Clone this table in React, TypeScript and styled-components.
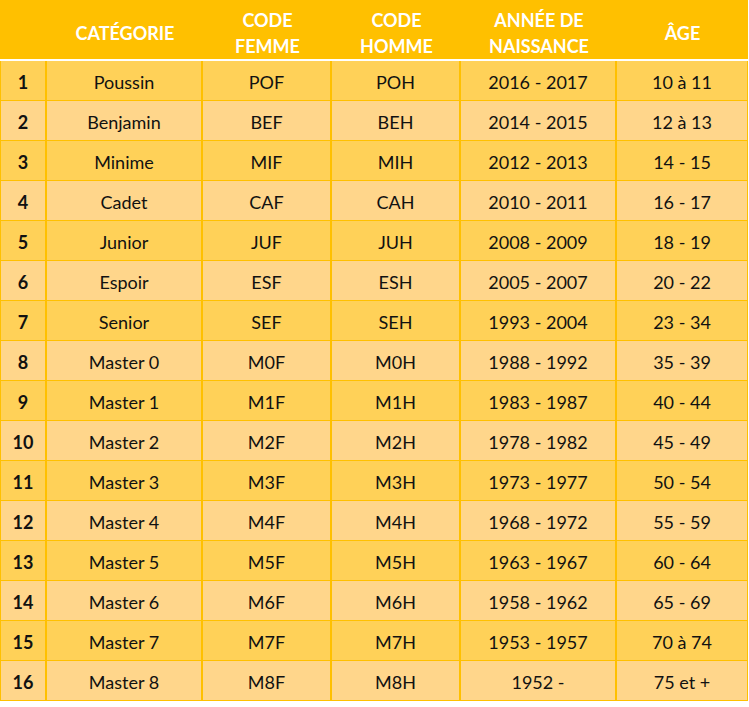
import styled, { createGlobalStyle } from 'styled-components'

const GlobalStyle = createGlobalStyle`
  body {
    margin: 0;
    background: #ffffff;
    font-family: Lato, 'Liberation Sans', sans-serif;
  }
`

const COLS = '47px 156px 129px 129px 156px 131px'

const Table = styled.div`
  width: 748px;
`

const HeaderRow = styled.div`
  display: grid;
  grid-template-columns: ${COLS};
  height: 59px;
  background: #ffc000;
  border-bottom: 2px solid #ffffff;
`

const HeadCell = styled.div`
  display: flex;
  align-items: center;
  justify-content: center;
  padding-top: 7px;
  box-sizing: border-box;
  text-align: center;
  color: #ffffff;
  font-weight: 700;
  font-size: 18px;
  line-height: 26px;
  text-transform: uppercase;
`

const Row = styled.div<{ $odd: boolean }>`
  display: grid;
  grid-template-columns: ${COLS};
  height: 40px;
  box-sizing: border-box;
  background: ${(p) => (p.$odd ? '#ffd158' : '#ffd68b')};
  border-bottom: 1px solid #ffc000;
`

const Cell = styled.div<{ $bold?: boolean; $first?: boolean; $last?: boolean }>`
  display: flex;
  align-items: center;
  justify-content: center;
  padding-top: 2px;
  box-sizing: border-box;
  color: #111111;
  font-size: 18px;
  font-weight: ${(p) => (p.$bold ? 700 : 400)};
  border-left: ${(p) => (p.$first ? '1px solid #ffc000' : 'none')};
  border-right: ${(p) => (p.$last ? '1px' : '2px')} solid #ffc000;
`

const rows = [
  ['Poussin', 'POF', 'POH', '2016 - 2017', '10 à 11'],
  ['Benjamin', 'BEF', 'BEH', '2014 - 2015', '12 à 13'],
  ['Minime', 'MIF', 'MIH', '2012 - 2013', '14 - 15'],
  ['Cadet', 'CAF', 'CAH', '2010 - 2011', '16 - 17'],
  ['Junior', 'JUF', 'JUH', '2008 - 2009', '18 - 19'],
  ['Espoir', 'ESF', 'ESH', '2005 - 2007', '20 - 22'],
  ['Senior', 'SEF', 'SEH', '1993 - 2004', '23 - 34'],
  ['Master 0', 'M0F', 'M0H', '1988 - 1992', '35 - 39'],
  ['Master 1', 'M1F', 'M1H', '1983 - 1987', '40 - 44'],
  ['Master 2', 'M2F', 'M2H', '1978 - 1982', '45 - 49'],
  ['Master 3', 'M3F', 'M3H', '1973 - 1977', '50 - 54'],
  ['Master 4', 'M4F', 'M4H', '1968 - 1972', '55 - 59'],
  ['Master 5', 'M5F', 'M5H', '1963 - 1967', '60 - 64'],
  ['Master 6', 'M6F', 'M6H', '1958 - 1962', '65 - 69'],
  ['Master 7', 'M7F', 'M7H', '1953 - 1957', '70 à 74'],
  ['Master 8', 'M8F', 'M8H', '1952 -', '75 et +']
]

export default function App () {
  return (
    <>
      <GlobalStyle />
      <Table>
        <HeaderRow>
          <HeadCell />
          <HeadCell>Catégorie</HeadCell>
          <HeadCell>Code<br />Femme</HeadCell>
          <HeadCell>Code<br />Homme</HeadCell>
          <HeadCell>Année de<br />naissance</HeadCell>
          <HeadCell>Âge</HeadCell>
        </HeaderRow>
        {rows.map((r, i) => (
          <Row key={i} $odd={i % 2 === 0}>
            <Cell $bold $first>{i + 1}</Cell>
            {r.map((v, j) => (
              <Cell key={j} $last={j === r.length - 1}>{v}</Cell>
            ))}
          </Row>
        ))}
      </Table>
    </>
  )
}
